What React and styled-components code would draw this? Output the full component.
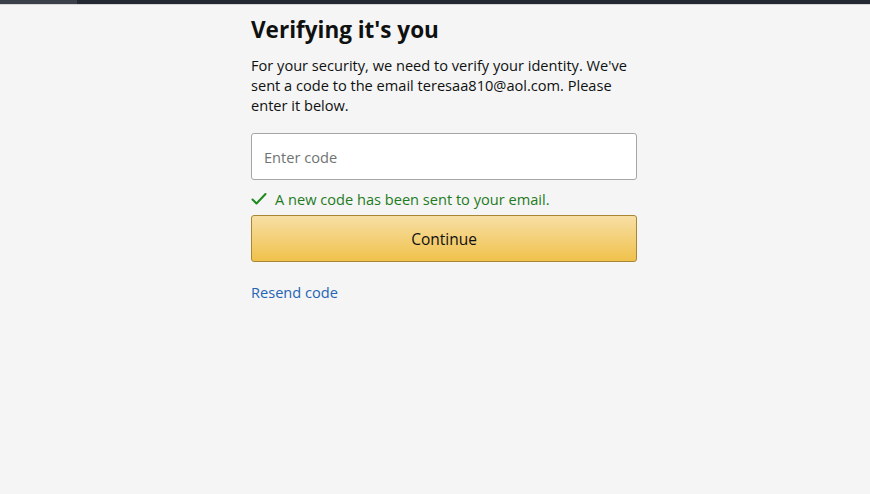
import React from "react";
import styled, { createGlobalStyle } from "styled-components";

const Global = createGlobalStyle`
  html, body {
    margin: 0;
    padding: 0;
    background: #f5f5f5;
    font-family: "Open Sans", "Noto Sans", Arial, sans-serif;
    color: #0f1111;
  }
`;

const Page = styled.div`
  min-height: 494px;
  background: #f5f5f5;
  display: flex;
  flex-direction: column;
`;

const TopBar = styled.div`
  display: flex;
  height: 4px;
  background: #232833;
  border-bottom: 1px solid #d5d5d5;
`;

const TopTab = styled.div`
  width: 77px;
  background: #3b3f4a;
`;

const Content = styled.main`
  width: 386px;
  margin-left: 251px;
  padding-top: 10px;
  display: flex;
  flex-direction: column;
`;

const Title = styled.h1`
  margin: 0;
  font-size: 22.5px;
  line-height: 30px;
  font-weight: 700;
  color: #0f1111;
`;

const Intro = styled.p`
  margin: 10px 0 0;
  font-size: 14.6px;
  line-height: 20px;
  color: #0f1111;
`;

const CodeInput = styled.input`
  box-sizing: border-box;
  margin-top: 18px;
  width: 100%;
  height: 47px;
  padding: 0 12px;
  border: 1px solid #a6a6a6;
  border-radius: 3px;
  background: #fff;
  font-family: inherit;
  font-size: 14.6px;
  color: #0f1111;
  outline: none;

  &::placeholder {
    color: #6f7373;
  }
`;

const Notice = styled.div`
  display: flex;
  align-items: center;
  gap: 8px;
  margin-top: 10px;
  font-size: 14.6px;
  line-height: 18px;
  color: #1e7b1e;
`;

const Button = styled.button`
  box-sizing: border-box;
  margin-top: 7px;
  width: 100%;
  height: 47px;
  border: 1px solid #a88734;
  border-radius: 3px;
  background: linear-gradient(to bottom, #f7dfa5, #f0c14b);
  font-family: inherit;
  font-size: 15.5px;
  color: #111;
  cursor: pointer;
`;

const Link = styled.a`
  margin-top: 21px;
  font-size: 14.6px;
  line-height: 18px;
  color: #2464b4;
  text-decoration: none;
  align-self: flex-start;
`;

const Check = () => (
  <svg width="16" height="14" viewBox="0 0 16 14" aria-hidden="true">
    <path d="M1.5 7.5 L5.5 11.5 L14.5 2" fill="none" stroke="#1d8a1d" strokeWidth="2" strokeLinecap="round" strokeLinejoin="round" />
  </svg>
);

export default function App() {
  return (
    <>
      <Global />
      <Page>
        <TopBar>
          <TopTab />
        </TopBar>
        <Content>
          <Title>Verifying it's you</Title>
          <Intro>
            For your security, we need to verify your identity. We've sent a code to the email teresaa810@aol.com. Please enter it below.
          </Intro>
          <CodeInput placeholder="Enter code" />
          <Notice>
            <Check />
            A new code has been sent to your email.
          </Notice>
          <Button>Continue</Button>
          <Link href="#">Resend code</Link>
        </Content>
      </Page>
    </>
  );
}
